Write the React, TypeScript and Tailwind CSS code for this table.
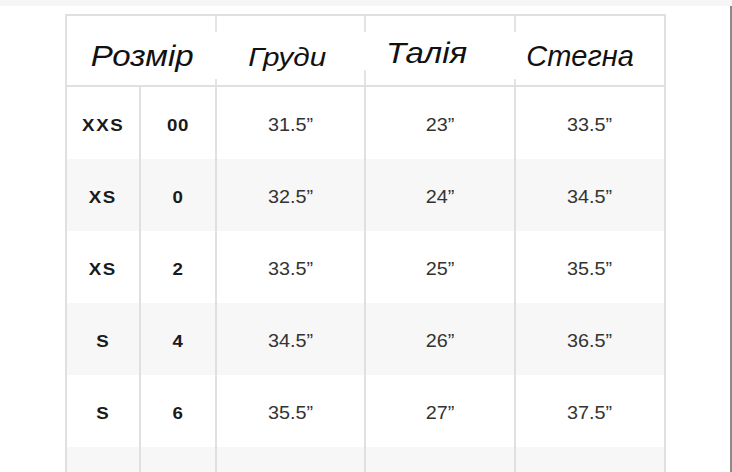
import React from "react";

const rows = [
  { a: "XXS", b: "00", c: "31.5”", d: "23”", e: "33.5”" },
  { a: "XS", b: "0", c: "32.5”", d: "24”", e: "34.5”" },
  { a: "XS", b: "2", c: "33.5”", d: "25”", e: "35.5”" },
  { a: "S", b: "4", c: "34.5”", d: "26”", e: "36.5”" },
  { a: "S", b: "6", c: "35.5”", d: "27”", e: "37.5”" },
  { a: "", b: "", c: "", d: "", e: "" },
];

function HeaderDivider({ top, bottom }: { top: string; bottom: string }) {
  return (
    <div className="w-[2px] flex flex-col justify-between">
      <div className={`${top} bg-[#e4e4e4]`} />
      <div className={`${bottom} bg-[#e4e4e4]`} />
    </div>
  );
}

export default function App() {
  const font = { fontFamily: '"Liberation Sans", Arial, sans-serif' };
  return (
    <div className="w-[732px] h-[472px] overflow-hidden bg-white flex flex-col" style={font}>
      <div className="h-[6px] bg-[#f6f6f6] shrink-0" />
      <div className="flex flex-1 min-h-0">
        <div className="w-[65px] shrink-0" />
        <div className="w-[601px] shrink-0 mt-[8px] border-2 border-b-0 border-[#e0e0e0] flex flex-col">
          {/* header */}
          <div className="h-[71px] shrink-0 flex border-b-2 border-[#e0e0e0] text-[#111]">
            <div className="w-[148px] flex justify-center pt-[26px]">
              <span className="inline-block italic text-[29px] leading-none scale-x-[1.14] translate-x-[1px]">Розмір</span>
            </div>
            <HeaderDivider top="h-[16px]" bottom="h-[6px]" />
            <div className="w-[147px] flex justify-center pt-[28px]">
              <span className="inline-block italic text-[26px] leading-none scale-x-[1.14] -translate-x-[3px]">Груди</span>
            </div>
            <HeaderDivider top="h-[16px]" bottom="h-[15px]" />
            <div className="w-[148px] flex justify-center pt-[23px]">
              <span className="inline-block italic text-[29px] leading-none scale-x-[1.14] -translate-x-[13px]">Талія</span>
            </div>
            <HeaderDivider top="h-[16px]" bottom="h-[6px]" />
            <div className="w-[148px] flex justify-center pt-[26px]">
              <span className="inline-block italic text-[29px] leading-none -translate-x-[10px]">Стегна</span>
            </div>
          </div>
          {/* body */}
          {rows.map((r, i) => (
            <div
              key={i}
              className={`h-[72px] shrink-0 flex ${i % 2 === 1 ? "bg-[#f7f7f7]" : "bg-white"}`}
            >
              <div className="w-[72px] flex items-center justify-center pt-[4px]">
                <span className="inline-block text-[17px] leading-none font-semibold tracking-[1.5px] text-[#1a1a1a] scale-x-[1.1]">{r.a}</span>
              </div>
              <div className="w-[76px] border-l-2 border-[#e0e0e0] flex items-center justify-center pt-[4px]">
                <span className="inline-block text-[17px] leading-none font-bold tracking-[0.5px] text-[#1a1a1a] scale-x-[1.1]">{r.b}</span>
              </div>
              <div className="w-[149px] border-l-2 border-[#e0e0e0] flex items-center justify-center pt-[4px]">
                <span className="inline-block text-[18px] leading-none text-[#333] scale-x-[1.1]">{r.c}</span>
              </div>
              <div className="w-[150px] border-l-2 border-[#e0e0e0] flex items-center justify-center pt-[4px]">
                <span className="inline-block text-[18px] leading-none text-[#333] scale-x-[1.1]">{r.d}</span>
              </div>
              <div className="w-[150px] border-l-2 border-[#e0e0e0] flex items-center justify-center pt-[4px]">
                <span className="inline-block text-[18px] leading-none text-[#333] scale-x-[1.1]">{r.e}</span>
              </div>
            </div>
          ))}
        </div>
        <div className="flex-1" />
        <div className="w-[2px] bg-[#8a8a8a] shrink-0" />
      </div>
    </div>
  );
}
